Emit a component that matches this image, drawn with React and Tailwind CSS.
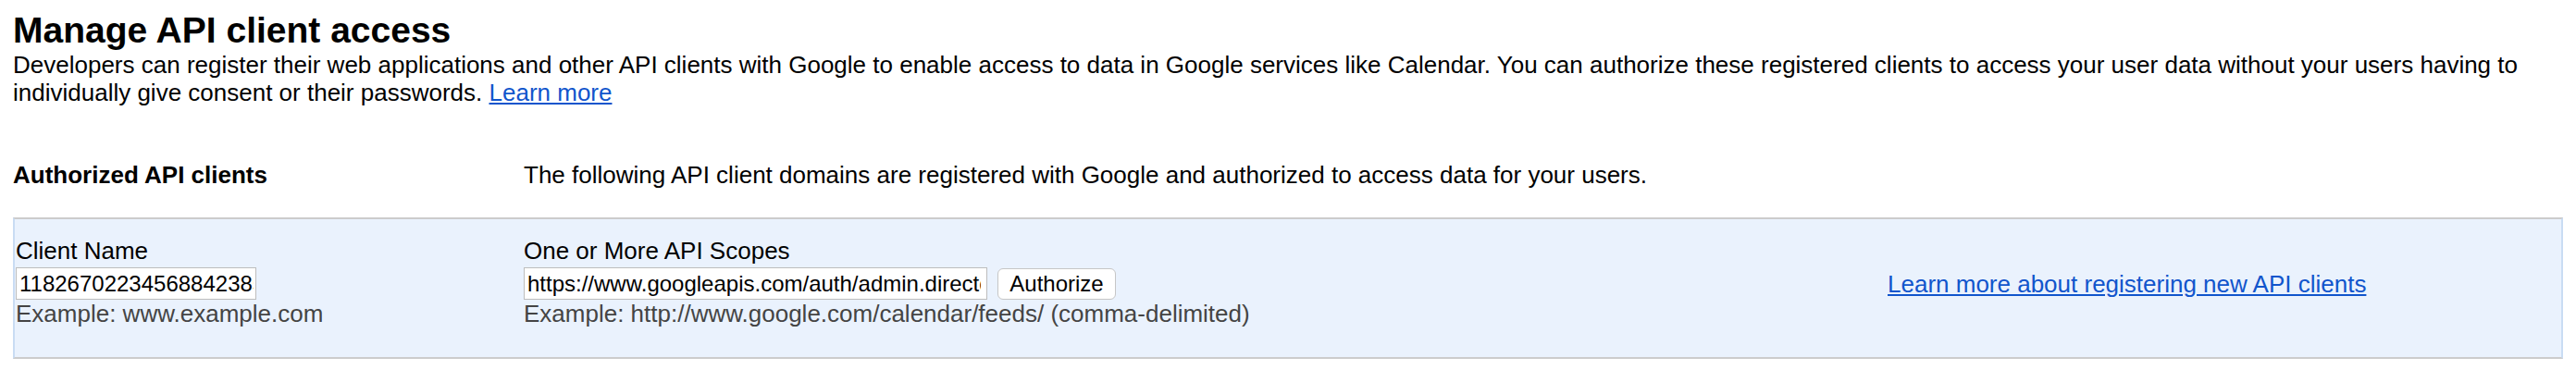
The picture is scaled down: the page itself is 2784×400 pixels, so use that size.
import React from 'react';

const font = { fontFamily: '"Liberation Sans", Arial, Helvetica, sans-serif' };

export default function App() {
  return (
    <div className="min-h-[400px] bg-white px-[14px] text-black font-['Liberation_Sans',Arial,sans-serif]">
      {/* page heading */}
      <h1 className="pt-[10px] text-[39px] leading-[45px] font-bold">Manage API client access</h1>
      <p className="text-[26px] leading-[30px]">
        Developers can register their web applications and other API clients with Google to enable access to data in Google services like Calendar. You can authorize these registered clients to access your user data without your users having to individually give consent or their passwords.{' '}
        <a href="#" className="text-[#1155cc] underline">Learn more</a>
      </p>

      {/* section header */}
      <div className="mt-[59px] grid grid-cols-[552px_1fr] text-[26px] leading-[30px]">
        <div className="font-bold">Authorized API clients</div>
        <div>The following API client domains are registered with Google and authorized to access data for your users.</div>
      </div>

      {/* add client form */}
      <div className="mt-[31px] flex border-y-2 border-y-[#cccccc] border-x-2 border-x-[#c9dcf3] bg-[#eaf2fd] pt-[19px] pb-[32px] text-[26px] leading-[30px]">
        <div className="w-[550px] pl-[1px]">
          <div>Client Name</div>
          <input
            type="text"
            defaultValue="118267022345688423856"
            className="mt-[3px] block h-[35px] w-[260px] border border-[#bdbdbd] bg-white pl-[3px] pr-[2px] text-[24px] text-black outline-none"
            style={font}
          />
          <div className="text-[#444444]">Example: www.example.com</div>
        </div>

        <div className="w-[1474px]">
          <div>One or More API Scopes</div>
          <div className="mt-[3px] flex items-center gap-[11px]">
            <input
              type="text"
              defaultValue="https://www.googleapis.com/auth/admin.directory.user"
              className="block h-[35px] w-[501px] border border-[#bdbdbd] bg-white pl-[3px] pr-[6px] text-[24px] text-black outline-none"
              style={font}
            />
            <button
              type="button"
              className="h-[34px] w-[128px] rounded-[6px] border border-[#c6c6c6] bg-white text-[24px] leading-none text-black"
              style={font}
            >
              Authorize
            </button>
          </div>
          <div className="text-[#444444]">Example: http://www.google.com/calendar/feeds/ (comma-delimited)</div>
        </div>

        <div className="pt-[36px]">
          <a href="#" className="text-[#1155cc] underline">Learn more about registering new API clients</a>
        </div>
      </div>
    </div>
  );
}
